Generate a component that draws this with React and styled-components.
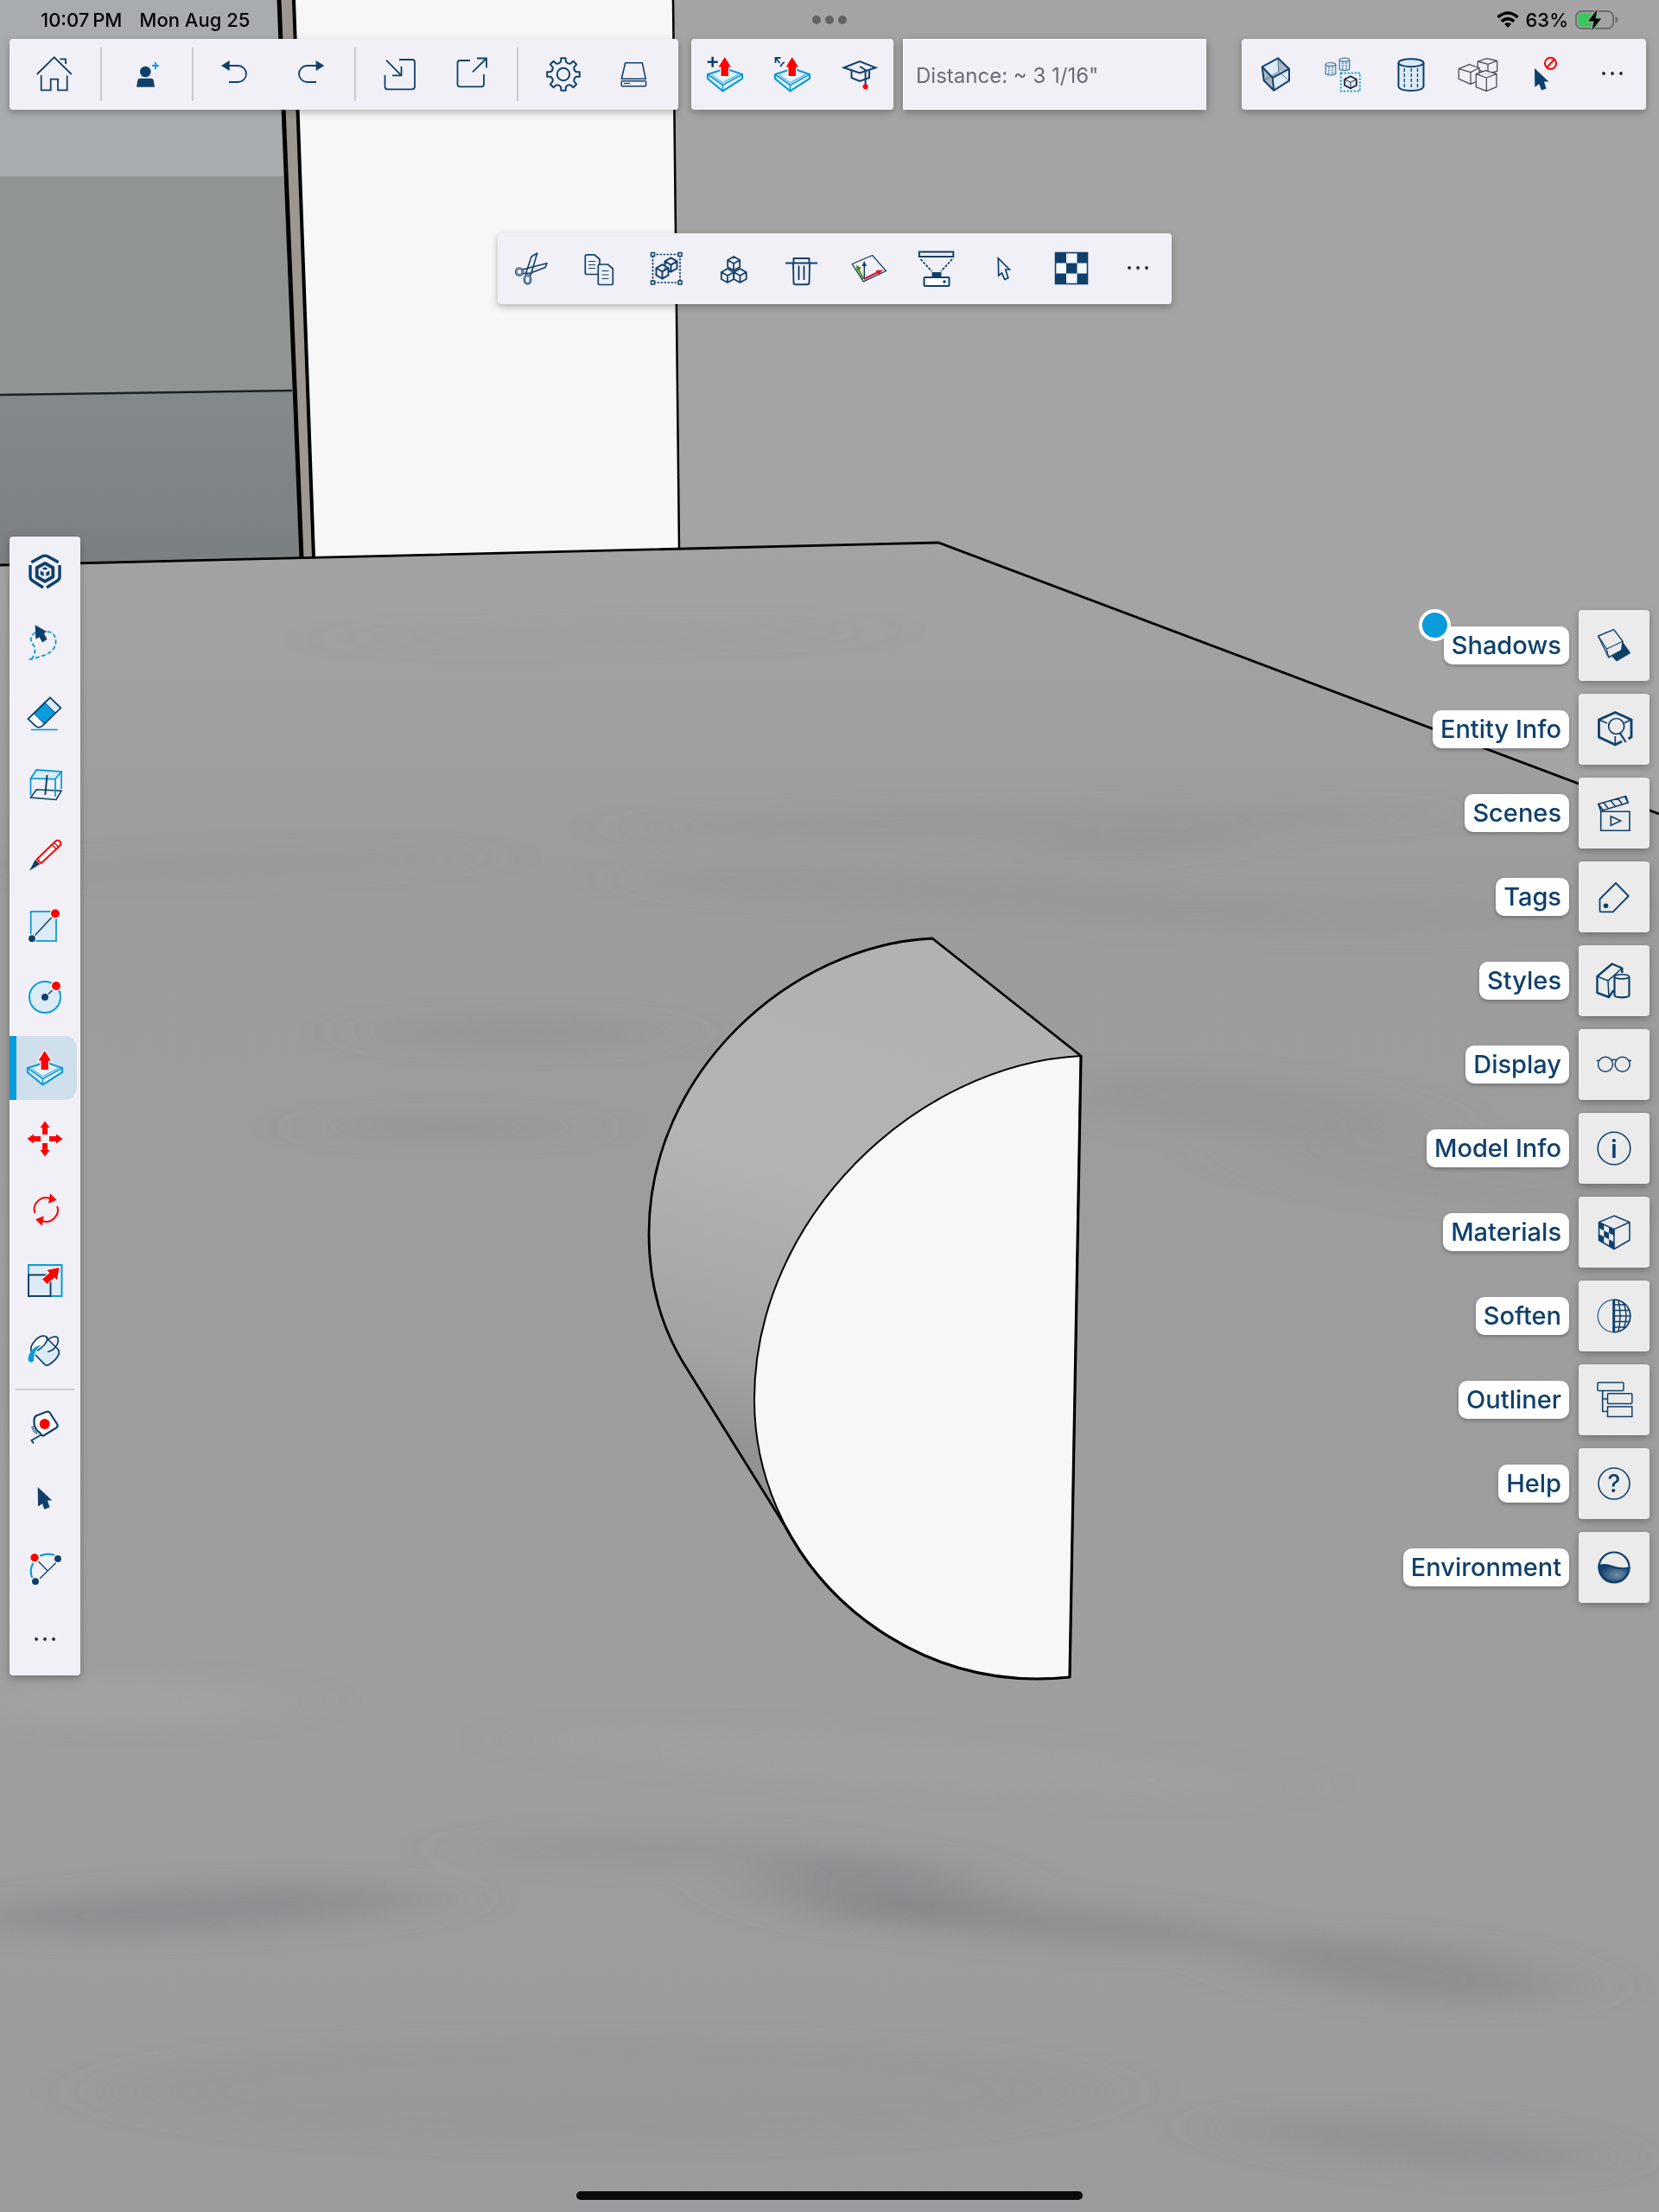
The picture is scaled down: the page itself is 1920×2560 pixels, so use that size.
import React, { useState } from "react";
import styled, { createGlobalStyle } from "styled-components";

const navy = "#0f406c";
const blue = "#0a9bda";
const red = "#ff0000";
const pale = "#dcebf7";
const panel = "#f1f0f6";

/* ---------- shared drawing parts ---------- */

const hex = (cx, cy, w, h) =>
  `M${cx} ${cy - h}L${cx + w} ${cy - h / 2}V${cy + h / 2}L${cx} ${cy + h}L${cx - w} ${cy + h / 2}V${cy - h / 2}Z` +
  `M${cx - w} ${cy - h / 2}L${cx} ${cy}L${cx + w} ${cy - h / 2}M${cx} ${cy}V${cy + h}`;

const gearPath = () => {
  const parts = [];
  const at = (deg, r) => {
    const a = ((deg - 90) * Math.PI) / 180;
    return `${(24 + r * Math.cos(a)).toFixed(2)} ${(24 + r * Math.sin(a)).toFixed(2)}`;
  };
  for (let i = 0; i < 8; i++) {
    const d = i * 45;
    parts.push(`${i ? "L" : "M"}${at(d - 8, 19)}`);
    parts.push(`L${at(d + 8, 19)}`);
    parts.push(`L${at(d + 11, 15)}`);
    parts.push(`Q${at(d + 22.5, 12.6)} ${at(d + 34, 15)}`);
  }
  return parts.join("") + "Z";
};

const Dots = () => (
  <g fill="#26243a" stroke="none">
    <circle cx="14" cy="23" r="1.9" />
    <circle cx="24" cy="23" r="1.9" />
    <circle cx="34" cy="23" r="1.9" />
  </g>
);

const PushPull = () => (
  <>
    <path d="M25 17.5L44 24V29L21.5 43.5L4 29V24Z" stroke={blue} strokeWidth="2.2" fill="#e4f1fa" />
    <path d="M4 24L21.5 36.5L44 24M21.5 36.5V43.5" stroke={blue} strokeWidth="1.6" />
    <path d="M8.5 24.5L21.5 33.8L39.5 24" stroke={blue} strokeWidth=".9" />
    <path
      d="M23.7 4L31 15.5H28V26H19.5V15.5H16.5Z"
      fill={red}
      stroke="#fff"
      strokeWidth="2.4"
      paintOrder="stroke"
    />
  </>
);

const Knob = ({ x, y, r = 4, color = navy }) => (
  <circle cx={x} cy={y} r={r} fill={color} stroke="#fff" strokeWidth="2.4" paintOrder="stroke" />
);

const icons = {
  home: (
    <path
      d="M2.7 24L22.7 4.3L42.7 24M29.3 6.3H36V12M7.7 25V42.3H18.7V29.7H27V42.3H37.7V25.5"
      strokeWidth="1.8"
    />
  ),
  invite: (
    <>
      <circle cx="22.3" cy="21" r="6.3" fill={navy} stroke="none" />
      <path d="M12 38.7L13.3 31Q13.8 28.7 16 28.7H29Q31.2 28.7 31.7 31L33 38.7Z" fill={navy} stroke="none" />
      <path d="M34 10V18M30 14H38" stroke={blue} />
    </>
  ),
  undo: (
    <>
      <path d="M4 14L13.7 8V20Z" fill={navy} stroke="none" />
      <path d="M13 14H23.5A9.5 9.5 0 0 1 23.5 33H13" strokeWidth="1.8" />
    </>
  ),
  redo: (
    <>
      <path d="M41.3 14L31.6 8V20Z" fill={navy} stroke="none" />
      <path d="M32 14H21.5A9.5 9.5 0 0 0 21.5 33H32" strokeWidth="1.8" />
    </>
  ),
  import: (
    <path
      d="M22 7H37Q40 7 40 10V38Q40 41.3 37 41.3H8.5Q5.5 41.3 5.5 38V25M7 7.7L24.5 25.3M24.5 14.7V25.3H14"
      strokeWidth="1.8"
    />
  ),
  export: (
    <path
      d="M22 8H10.5Q7.5 8 7.5 11V35.5Q7.5 38.3 10.5 38.3H35Q38 38.3 38 35.5V24M25 21.3L41 5.5M30 5.5H41V16.5"
      strokeWidth="1.8"
    />
  ),
  gear: (
    <>
      <path d={gearPath()} strokeWidth="2" strokeLinejoin="round" />
      <circle cx="24" cy="24" r="7.2" strokeWidth="2" />
    </>
  ),
  drive: (
    <>
      <path d="M13.7 10.7H33.3L37.3 29.3H9.3Z" strokeWidth="1.6" strokeLinejoin="round" />
      <rect x="9.3" y="31.7" width="28.3" height="6" rx="1" strokeWidth="1.5" />
      <path d="M12 34.5H19" strokeWidth="1.2" />
    </>
  ),
  pushAdd: (
    <>
      <PushPull />
      <path d="M9.7 3.7V15.7M3.7 9.7H15.7" strokeWidth="2.6" />
    </>
  ),
  pushStretch: (
    <>
      <PushPull />
      <path d="M4.5 11V5H10.5M4.5 5L9.5 11M10 15L14 10M14 10L14.5 11" strokeWidth="1.8" />
    </>
  ),
  learn: (
    <>
      <path d="M5.7 16.3L24 9L42.5 16.3L24 22.5Z" />
      <path d="M14.5 19.5V28L24 32L35 28V20" />
      <path d="M24 15L30.6 19V36" />
      <circle cx="30.6" cy="38.3" r="3" fill={red} stroke="none" />
    </>
  ),
  xray: (
    <>
      <path d="M27 5.3L40 17.7V31.3L22.3 42.7L10.7 31.3L8.7 15.3Z" fill={pale} stroke="none" />
      <path
        d="M8.7 15.3L20.7 28L22.3 42.7L10.7 31.3ZM27 5.3L40 17.7L27.7 21Z"
        fill="#a9b6c4"
        stroke="none"
      />
      <path d="M27 5.3L27.7 21L10.7 31.3M27.7 21L40 31.3" stroke="#5b7088" strokeWidth="1" />
      <path
        d="M27 5.3L40 17.7V31.3L22.3 42.7L10.7 31.3L8.7 15.3ZM8.7 15.3L20.7 28L40 17.7M20.7 28L22.3 42.7"
        strokeLinejoin="round"
      />
    </>
  ),
  hideRest: (
    <>
      {[[10, 12.5], [26, 7.2]].map(([x, y]) => (
        <g key={x} stroke="#4d7393" strokeWidth="1.2" fill={pale}>
          <path d={`M${x - 5.8} ${y}V${y + 11}Q${x} ${y + 14} ${x + 5.8} ${y + 11}V${y}`} />
          <ellipse cx={x} cy={y} rx="5.8" ry="2" />
          <path d={`M${x - 2} ${y + 3}V${y + 12}M${x + 2} ${y + 3}V${y + 12}`} strokeDasharray="2 1" />
        </g>
      ))}
      <rect x="21.8" y="22.5" width="22" height="21" stroke={blue} strokeDasharray="2 2" />
      <path d={hex(33, 33.3, 6.8, 7)} stroke="#26243a" strokeWidth="1" fill={pale} />
      <path d="M33 26.3L39.8 29.8V36.8L33 40.3L26.2 36.8V29.8Z" stroke="#26243a" strokeWidth="1.8" />
    </>
  ),
  cylinder: (
    <>
      <path d="M10.5 10.7V38.5Q12 42.7 25 43Q38 42.7 39.5 38.5V10.7" fill={pale} />
      <ellipse cx="25" cy="10.7" rx="14.5" ry="4.5" fill={pale} />
      <path d="M17.3 17V40M25.3 17V41M32.5 17V40" strokeWidth="1.3" strokeDasharray="4 2" />
    </>
  ),
  boxes: (
    <g stroke="#4c4a5c" strokeWidth="1.3" fill={panel} strokeLinejoin="round">
      <path d="M35 5.7L46.7 8.5V20.3L36 23L24.3 18.7V9ZM24.3 9L36 12.3L46.7 8.5M36 12.3V23" />
      <path d="M14.3 12.7L26 16.5V31L16 35.3L2.3 29.3V17.7ZM2.3 17.7L16 21.7L26 16.5M16 21.7V35.3" />
      <path d="M33.3 19.7L46 23.3V38.7L34.3 43.3L22.3 38.7V23.7ZM22.3 23.7L34.3 28L46 23.3M34.3 28V43.3" />
    </g>
  ),
  deselect: (
    <>
      <path
        d="M12 17L28.5 32.5H23L25.5 40.5L20 42.5L17.3 35.3L12.3 38.7Z"
        fill={navy}
        stroke="none"
      />
      <circle cx="30.5" cy="11.3" r="6.6" stroke={red} />
      <path d="M26 16L35 6.7" stroke={red} />
    </>
  ),
  more: <Dots />,
  cut: (
    <>
      <path
        d="M17 31L24 10L30.7 6L23 32M13.5 25L29 21L42 17.8L40 22.5L23 29L13.5 29.5"
        strokeWidth="1.6"
        strokeLinejoin="round"
      />
      <ellipse cx="10" cy="27.5" rx="3.8" ry="4" strokeWidth="2.6" />
      <ellipse cx="19.5" cy="36.5" rx="3.6" ry="5" strokeWidth="2.6" />
      <ellipse cx="10" cy="27.5" rx="3.8" ry="4" stroke="#fff" strokeWidth=".6" />
      <ellipse cx="19.5" cy="36.5" rx="3.6" ry="5" stroke="#fff" strokeWidth=".6" />
    </>
  ),
  copy: (
    <>
      <path d="M23 30.5H10Q8.3 30.5 8.3 29V9.5Q8.3 7.8 10 7.8H19L25 13V20" strokeWidth="1.7" />
      <path
        d="M12 15.5H20M12 19.5H20M12 23.5H20M27.5 26.5H35.5M27.5 31H35.5M27.5 35.5H35.5"
        strokeWidth="1"
      />
      <path
        d="M23.3 20.5Q23.3 19 25 19H34.5L40.3 24V41Q40.3 42.5 38.5 42.5H25Q23.3 42.5 23.3 41Z"
        strokeWidth="1.7"
      />
    </>
  ),
  group: (
    <>
      <path d="M8.5 7.5H40V40H8.5Z" strokeDasharray="2.5 1.5" strokeWidth="1.7" />
      <g fill={panel} strokeWidth="1.5">
        <path d="M6.5 5.5H10.5V9.5H6.5ZM38 5.5H42V9.5H38ZM6.5 38H10.5V42H6.5ZM38 38H42V42H38Z" />
        <path d={hex(29.5, 19.5, 7, 8.2)} strokeWidth="2" />
        <path d={hex(19.5, 27.3, 7, 8.2)} strokeWidth="2" />
      </g>
    </>
  ),
  components: (
    <g strokeWidth="1.8" strokeLinejoin="round">
      <path d={hex(24.2, 18, 7, 8)} />
      <path d={hex(17, 32, 7.2, 8)} />
      <path d={hex(31.5, 32, 7.2, 8)} />
    </g>
  ),
  trash: (
    <path
      d="M6 17.5H43M15.5 17.5V12H33.5V17.5M15 18L15.5 40Q15.5 42.3 18 42.3H31Q33.5 42.3 33.5 40L34 18M21.5 20.5V37M27.5 20.5V37"
      strokeWidth="1.9"
    />
  ),
  axes: (
    <>
      <path d="M5.2 18.5L28.7 8.5L44.4 26.5L18.3 38.8Z" strokeWidth="1.3" />
      <path d="M19.3 35V18" strokeWidth="1.5" />
      <path d="M19.3 15L22 21H16.5Z" fill={navy} stroke="none" />
      <path d="M18.5 36L12.5 25" stroke="#4a8a12" />
      <path d="M9.5 20L16 23L11 27Z" fill="#4a8a12" stroke="none" />
      <path d="M19 36L35 28" stroke="#d8141c" />
      <path d="M41 25.3L32.5 26L35.5 31Z" fill="#d8141c" stroke="none" />
    </>
  ),
  flatten: (
    <>
      <rect x="4.8" y="4.5" width="39.5" height="5.5" />
      <path d="M6.5 13L19.5 27M43 13L30 27" strokeDasharray="3 1.5" strokeWidth="1.8" />
      <rect x="19.5" y="28" width="11" height="5.5" fill={navy} stroke="none" />
      <rect x="10.5" y="34" width="29" height="10" rx="1" fill="#fff" />
      <circle cx="34" cy="39" r="1.8" fill={navy} stroke="none" />
    </>
  ),
  select: (
    <path
      d="M18.3 11.8L31.3 25H26.7L29.8 34.8L25.7 36.3L22.5 28.8L18.7 32Z"
      strokeWidth="1.7"
    />
  ),
  checker: (
    <>
      <rect x="6.5" y="5.5" width="37" height="36" fill="#f4f8fc" strokeWidth="1.6" />
      <path
        d="M6.5 5.5H19V17.5H6.5ZM31.5 5.5H43.5V17.5H31.5ZM19 17.5H31.5V29.5H19ZM6.5 29.5H19V41.5H6.5ZM31.5 29.5H43.5V41.5H31.5Z"
        fill={navy}
        stroke="none"
      />
    </>
  ),
  brand: (
    <g strokeWidth="3.4">
      <path d="M8.3 12.8L20.5 6Q24 4.3 27.5 6L39.7 12.8M7 16V29.5Q7 32.5 9.5 34L22 42M41 16V29.5Q41 32.5 38.5 34L26 42" />
      <path d="M24 13.8L33.3 19V29.5L24 34.8L14.7 29.5V19Z" strokeWidth="3.8" strokeLinejoin="round" />
      <path
        d="M24 18.3L27.5 20L24 21.7L20.5 20ZM18.7 22.5L22.7 24.5V29L18.7 27ZM29.3 22.5L25.3 24.5V29L29.3 27Z"
        fill={navy}
        stroke="none"
      />
    </g>
  ),
  lasso: (
    <>
      <path
        d="M13 12C6 16 7 22 11 27C14 32 12 38 9 42L5.5 43.5C18 40 36 37 36.5 23.5C37 13 30 9 21 12"
        stroke={blue}
        strokeWidth="1.8"
        strokeDasharray="5 2.5"
      />
      <path
        d="M12.7 3.3L26 11L23 13L26.5 20L21 23.5L17.5 17.3L13.3 19.7Z"
        fill={navy}
        stroke="none"
      />
    </>
  ),
  eraser: (
    <>
      <path d="M30 5.3L42.3 17.3L21.5 37.7Q17 42 12.5 37.7L4.5 30Z" fill={pale} stroke="none" />
      <path d="M11.3 23.5L22.7 36L21 38Q17 42 12.5 37.7L4.5 30Z" fill="#fff" stroke="none" />
      <path d="M23.7 11L36.3 23.3L23.5 36L11 23.5Z" fill={blue} strokeWidth="1" />
      <path d="M30 5.3L42.3 17.3L21.5 37.7Q17 42 12.5 37.7L4.5 30Z" strokeWidth="1.8" />
      <path d="M8 42.5H38.7" stroke={blue} strokeWidth="1.6" />
    </>
  ),
  section: (
    <>
      <path d="M7.5 39L14.3 29.7L43 31.3L37 41.5Z" strokeWidth="1.6" />
      <path d="M7.5 17L14.3 7L43 9L36 17.7Z" fill={pale} stroke={blue} strokeWidth="1.8" />
      <path d="M7.5 17V36.5M36 17.7V38M43 9V29" stroke={blue} strokeWidth="1.8" />
      <path d="M26.5 13L24.3 36" strokeWidth="2" />
    </>
  ),
  pencil: (
    <>
      <path d="M14.7 28.5L36 7.7Q39 5 41.5 8Q43.5 10.5 41 13L19.7 33Z" stroke={red} fill="#fff" />
      <path d="M32 11.5L37 16.5M34.5 9L39.5 14" stroke={red} strokeWidth="1.5" />
      <path d="M6 41.7L12.7 29L18.5 34Z" fill={navy} stroke="none" />
    </>
  ),
  rectangle: (
    <>
      <rect x="7.7" y="7" width="29.3" height="34" fill={pale} stroke={blue} strokeWidth="1.8" />
      <path d="M9 38.3L36 9.3" strokeWidth="1.5" />
      <Knob x={9} y={38.3} />
      <Knob x={36} y={9.3} r={5} color={red} />
    </>
  ),
  circle: (
    <>
      <circle cx="24" cy="24" r="18" fill={pale} stroke={blue} />
      <path d="M28 20.5L32.5 16" strokeWidth="1.5" />
      <circle cx="24" cy="24" r="4" fill={navy} stroke="none" />
      <Knob x={37} y={11} r={5} color={red} />
    </>
  ),
  push: <PushPull />,
  move: (
    <g fill={red} stroke="none">
      {[0, 90, 180, 270].map((a) => (
        <path key={a} transform={`rotate(${a} 24 24)`} d="M24 3.5L29.5 11H27V19H21V11H18.5Z" />
      ))}
    </g>
  ),
  rotate: (
    <>
      {[0, 180].map((a) => (
        <g key={a} transform={`rotate(${a} 25.3 24)`}>
          <path d="M12.3 28A13.7 13.7 0 0 1 30 11" stroke={red} />
          <path d="M30 5.3L37.5 12.7L28 16.7Z" fill={red} stroke="none" />
        </g>
      ))}
    </>
  ),
  scale: (
    <>
      <rect x="5" y="6" width="38.5" height="36" fill={pale} stroke={blue} />
      <rect x="5" y="17.5" width="25.5" height="24.5" />
      <path
        d="M40.5 9L26 12L29.3 15L21 22.5L26.5 28L35 20.5L38 23.5Z"
        fill={red}
        stroke="#fff"
        strokeWidth="2"
        paintOrder="stroke"
      />
    </>
  ),
  paint: (
    <>
      <path
        d="M11 17L19 8L27 8L40 22.5Q41.5 25 39.5 29Q36 36 29 40Q26 41.5 23.5 39L9 24Z"
        fill={pale}
        stroke="none"
      />
      <path d="M8 24C6 16 17 4 25 6.5C30 8.5 24 18 15 23" strokeWidth="1.7" fill="#fff" />
      <path d="M20 17C12 16 3 27 5 35Q8 38.5 11 35C11 27 13 21 20 17Z" fill={blue} stroke="none" />
      <path
        d="M25 7.5L39.5 22Q41.3 25 39.5 28.5Q36 35 28.5 39.5Q26 41 23.5 38.8L13 28"
        strokeWidth="1.7"
      />
      <path d="M27 11C32 6 38 6 39 9C40.5 15 35 23 27 24.5" strokeWidth="1.7" />
    </>
  ),
  tape: (
    <>
      <path
        d="M14 10.5L25.5 6Q28.5 5 30 7.5L38.3 20.5Q39.5 22.8 37 24.5L22.5 33.5Q20 34 18 30Q11 26 11.5 16Q11.5 12 14 10.5Z"
        fill="#fff"
        strokeWidth="2.2"
      />
      <path d="M20.5 32L8.5 39L11 42.5" strokeWidth="1.9" />
      <path d="M9.5 23Q10.5 29 16 31.5" strokeWidth="2.6" strokeDasharray="1.2 1" />
      <circle cx="23.7" cy="20" r="6" fill={red} stroke="none" />
    </>
  ),
  pointer: (
    <path
      d="M15.7 11L32.3 26.5H27L29.5 34.5L23.3 36.8L21 30.3L16 33.5Z"
      fill={navy}
      stroke="none"
    />
  ),
  arc: (
    <>
      <path d="M18 8.8Q26 5 35 7.7M10.3 17Q5.5 26 9.3 34" stroke={blue} strokeWidth="2.2" />
      <path d="M16.7 15.3L27.3 26.3M36.7 16.7L18 35" strokeWidth="1.3" />
      <Knob x={12} y={10.7} r={4.7} color={red} />
      <Knob x={39} y={12} />
      <Knob x={13} y={38.3} />
    </>
  ),
  shadows: (
    <>
      <path d="M22 36.7L33 29.5L34 20.5L42.7 32.7L27 42Z" fill={navy} strokeWidth="1" />
      <path d="M5.7 13L23.7 5.7L34 19.3L32.7 29.5L17.7 37.7Z" strokeWidth="1.4" />
      <path d="M5.7 13L15.5 28L17.7 37.7M15.5 28L34 19.3" strokeWidth="1.1" />
    </>
  ),
  entity: (
    <>
      <path d="M33 38L25.3 42L6.5 33V13L25.3 4.5L44 13V33L40.5 35" strokeWidth="2.8" />
      <path d="M6.5 13L16 17M44 13L36 16.5M25.3 32V42" strokeWidth="1.7" />
      <circle cx="26.7" cy="20.5" r="9" strokeWidth="1.7" />
      <path d="M31 28.7L37.7 39" strokeWidth="2.2" />
    </>
  ),
  scenes: (
    <>
      <path
        d="M5.7 13.5L37.7 4.5L40.3 12L8.7 21.5ZM12 12L17 18.5M20 9.5L25.5 16M28.5 7.2L33.5 13.7M6 13.5L11 20.5M36.5 5L40 12"
        strokeWidth="1.6"
      />
      <path d="M8.7 22.3H42V44.3H8.7ZM20.3 27.7L31.7 33L20.3 38.3Z" strokeWidth="1.6" />
    </>
  ),
  tags: (
    <>
      <path
        d="M26 8L40.7 23L22.7 41.3H9Q7.5 41.3 7.5 39.8V26.5Z"
        strokeWidth="1.8"
        strokeLinejoin="round"
      />
      <circle cx="14.5" cy="34.3" r="2.8" fill={navy} stroke="none" />
    </>
  ),
  styles: (
    <>
      <path
        d="M33.3 15V9.5L21.7 4.5L4.5 19V38L18 43L23.5 35"
        strokeWidth="2.4"
        strokeLinejoin="round"
      />
      <path d="M4.5 19L17 24L33.3 9.5M17 24L18 43" strokeWidth="1.6" />
      <path
        d="M24.5 19.5V41Q24.5 43 33 43.3Q41.5 43 41.5 41V19.5"
        fill="#ebebec"
        strokeWidth="2.2"
      />
      <ellipse cx="33" cy="19.3" rx="8.5" ry="2.6" fill="#ebebec" strokeWidth="1.6" />
    </>
  ),
  display: (
    <>
      <circle cx="14" cy="23.7" r="8.5" strokeWidth="1.5" />
      <circle cx="33.7" cy="23.7" r="8.5" strokeWidth="1.5" />
      <path d="M3.7 19.5H7M40.5 19.5H44M21 19Q24 17.5 26.7 19" strokeWidth="1.5" />
    </>
  ),
  info: (
    <>
      <circle cx="24" cy="24" r="18.8" strokeWidth="1.6" />
      <text x="24" y="35" fontSize="28" fontWeight="600" textAnchor="middle" fill={navy} stroke="none">
        i
      </text>
    </>
  ),
  materials: (
    <>
      <path
        d="M6.3 12.3L12.2 15.1V22.3L18.1 25.1V32.3L24 35.5V43.7L18.1 40.5V32.3L12.2 29.3V22.3L6.3 19.3Z M18.1 17.9L24 20.7V28L18.1 25.1Z M6.3 26.3L12.2 29.3V36.8L6.3 33.3Z"
        fill={navy}
        stroke="none"
      />
      <path
        d="M24 5L42 12.5V33.3L24 43.5L6.5 33.3V12.5ZM6.5 12.5L24 20.7L42 12.5M24 20.7V43.5"
        strokeWidth="1.6"
      />
    </>
  ),
  soften: (
    <>
      <circle cx="24" cy="24" r="18.8" strokeWidth="1.4" opacity=".75" />
      <path
        d="M24 5.2A18.8 18.8 0 0 1 24 42.8M24.5 11H37M24.5 17.5H41M24.5 24H42.5M24.5 30.5H41M24.5 37H37M29 6Q33 24 29 42M35 9Q41 24 35 39"
        strokeWidth="1.5"
      />
      <path d="M23.7 5.2V42.8" strokeWidth="3" />
    </>
  ),
  outliner: (
    <>
      <rect x="5" y="4" width="30" height="9.5" rx="1" strokeWidth="1.5" />
      <rect x="16.5" y="16.8" width="28.3" height="11.7" rx="1" strokeWidth="1.5" />
      <rect x="16.5" y="32" width="28.3" height="11.5" strokeWidth="1.5" />
      <path d="M10.7 13.5V37.5H16.5M10.7 23H16.5" strokeWidth="1.6" />
    </>
  ),
  help: (
    <>
      <circle cx="24" cy="24" r="18" strokeWidth="1.6" />
      <text x="24" y="34" fontSize="28" fontWeight="500" textAnchor="middle" fill={navy} stroke="none">
        ?
      </text>
    </>
  ),
  environment: (
    <>
      <defs>
        <radialGradient id="water" cx=".6" cy=".6" r=".6">
          <stop offset="0" stopColor="#7390ab" />
          <stop offset="1" stopColor={navy} />
        </radialGradient>
      </defs>
      <path d="M6.5 22Q14 19.5 22 23T41.5 24.5A17.5 17.5 0 0 1 6.5 22Z" fill="url(#water)" />
      <circle cx="24" cy="24" r="17.5" strokeWidth="2.2" />
    </>
  ),
};

const Icon = ({ name }) => (
  <Glyph viewBox="0 0 48 48" aria-hidden="true">
    {icons[name]}
  </Glyph>
);

const Tools = ({ items }) =>
  items.map(([name, label]) => (
    <ToolButton key={name} aria-label={label}>
      <Icon name={name} />
    </ToolButton>
  ));

/* ---------- data ---------- */

const fileGroups = [
  [["home", "Home"]],
  [["invite", "Invite"]],
  [["undo", "Undo"], ["redo", "Redo"]],
  [["import", "Import"], ["export", "Export"]],
  [["gear", "Settings"], ["drive", "Storage"]],
];

const modifiers = [
  ["pushAdd", "Push/pull new face"],
  ["pushStretch", "Push/pull stretch"],
  ["learn", "Learn"],
];

const viewTools = [
  ["xray", "X-ray"],
  ["hideRest", "Hide rest of model"],
  ["cylinder", "Hidden geometry"],
  ["boxes", "Similar components"],
  ["deselect", "Deselect"],
  ["more", "More view tools"],
];

const editTools = [
  ["cut", "Cut"],
  ["copy", "Copy"],
  ["group", "Make group"],
  ["components", "Make component"],
  ["trash", "Delete"],
  ["axes", "Align axes"],
  ["flatten", "Flatten"],
  ["select", "Select"],
  ["checker", "Texture"],
  ["more", "More edit tools"],
];

const drawTools = [
  ["brand", "Search"],
  ["lasso", "Lasso"],
  ["eraser", "Eraser"],
  ["section", "Section plane"],
  ["pencil", "Line"],
  ["rectangle", "Rectangle"],
  ["circle", "Circle"],
  ["push", "Push/Pull"],
  ["move", "Move"],
  ["rotate", "Rotate"],
  ["scale", "Scale"],
  ["paint", "Paint"],
];

const recentTools = [
  ["tape", "Tape measure"],
  ["pointer", "Select"],
  ["arc", "Arc"],
  ["more", "More tools"],
];

const panels = [
  ["shadows", "Shadows"],
  ["entity", "Entity Info"],
  ["scenes", "Scenes"],
  ["tags", "Tags"],
  ["styles", "Styles"],
  ["display", "Display"],
  ["info", "Model Info"],
  ["materials", "Materials"],
  ["soften", "Soften"],
  ["outliner", "Outliner"],
  ["help", "Help"],
  ["environment", "Environment"],
];

/* ---------- 3D viewport ---------- */

// cx, cy, rx, ry, colour, opacity, tilt
const smudges = [
  [700, 735, 300, 10, "#8f8f90", 0.12, -1],
  [1320, 975, 110, 8, "#77777a", 0.35, -3],
  [1200, 950, 460, 14, "#88888a", 0.2, -1],
  [1130, 1035, 380, 20, "#8c8c8e", 0.2, 3],
  [280, 1000, 260, 14, "#8c8c8e", 0.16, -2],
  [1560, 1060, 300, 20, "#8c8c8e", 0.16, 0],
  [600, 1195, 150, 18, "#858587", 0.3, 0],
  [520, 1305, 130, 14, "#858587", 0.26, 0],
  [1430, 1280, 200, 34, "#858587", 0.24, 6],
  [1720, 1360, 260, 34, "#8c8c8e", 0.22, 6],
  [1010, 2185, 130, 40, "#7c7c80", 0.45, 6],
  [1210, 2225, 240, 24, "#7c7c80", 0.4, 5],
  [1620, 2280, 180, 34, "#7c7c80", 0.42, 7],
  [230, 2210, 260, 28, "#7e7e82", 0.42, -3],
  [760, 2140, 200, 20, "#88888a", 0.26, 0],
  [140, 1970, 170, 26, "#acacac", 0.3, 0],
  [1050, 2040, 420, 26, "#a9a9aa", 0.25, 4],
  [700, 2420, 560, 60, "#88888c", 0.16, 0],
  [1640, 2480, 200, 28, "#838386", 0.32, 6],
];

const Viewport = () => (
  <Canvas viewBox="0 0 1920 2560" preserveAspectRatio="xMidYMid slice" aria-hidden="true">
    <defs>
      <linearGradient id="floor" x1="0" y1="0" x2="0" y2="1">
        <stop offset="0" stopColor="#a3a3a3" />
        <stop offset=".2" stopColor="#9c9c9d" />
        <stop offset=".7" stopColor="#9e9e9f" />
        <stop offset="1" stopColor="#9b9b9d" />
      </linearGradient>
      <linearGradient id="glass" x1="0" y1="0" x2="0" y2="1">
        <stop offset="0" stopColor="#84898c" />
        <stop offset="1" stopColor="#7b7f81" />
      </linearGradient>
      <linearGradient id="curve" gradientUnits="userSpaceOnUse" x1="1000" y1="1180" x2="850" y2="1680">
        <stop offset="0" stopColor="#b2b2b2" />
        <stop offset=".35" stopColor="#b4b4b4" />
        <stop offset=".8" stopColor="#a3a3a3" />
        <stop offset="1" stopColor="#929292" />
      </linearGradient>
      <filter id="soft" x="-20%" y="-20%" width="140%" height="140%">
        <feGaussianBlur stdDeviation="54 12" />
      </filter>
    </defs>
    <rect width="1920" height="2560" fill="#a4a4a4" />
    <path d="M0 0H322L348 646L0 654Z" fill="#909594" />
    <path d="M0 0H322L330 204H0Z" fill="#a8acae" />
    <path d="M0 457L338 452L348 646L0 654Z" fill="url(#glass)" />
    <path d="M0 457L338 452" stroke="#1d2020" strokeWidth="2.5" />
    <path d="M324 0L350 648H363L341 0Z" fill="#9c9790" />
    <path d="M341 0H779L786 636L363 646Z" fill="#f7f7f7" />
    <path d="M323 0L349 646" stroke="#000" strokeWidth="5" />
    <path d="M340 0L363 645" stroke="#000" strokeWidth="4" />
    <path d="M779 0L786 636" stroke="#000" strokeWidth="2.5" />
    <path d="M0 654L1086 628L1920 942V2560H0Z" fill="url(#floor)" />
    <g filter="url(#soft)">
      {smudges.map(([cx, cy, rx, ry, fill, opacity, tilt]) => (
        <ellipse
          key={`${cx}-${cy}`}
          cx={cx}
          cy={cy}
          rx={rx}
          ry={ry}
          fill={fill}
          opacity={opacity}
          transform={`rotate(${tilt} ${cx} ${cy})`}
        />
      ))}
    </g>
    <path d="M0 654L1086 628L1920 942" fill="none" stroke="#000" strokeWidth="2.8" />
    <path
      d="M1079 1086C915 1094 751 1241 751 1428C751 1486 765 1534 790 1576L909 1767L1251 1222Z"
      fill="url(#curve)"
      stroke="#000"
      strokeWidth="2.8"
      strokeLinejoin="round"
    />
    <path
      d="M1251 1222C1060 1232 873 1410 873 1620C873 1795 1020 1943 1200 1943Q1220 1943 1238 1941Z"
      fill="#f7f7f7"
      stroke="#000"
      strokeWidth="2"
      strokeLinejoin="round"
    />
    <path
      d="M909 1767C964 1870 1074 1943 1200 1943Q1220 1943 1238 1941L1251 1222"
      fill="none"
      stroke="#000"
      strokeWidth="3.2"
      strokeLinejoin="round"
    />
  </Canvas>
);

const App = () => {
  const [active, setActive] = useState("push");
  const [distance, setDistance] = useState('Distance: ~ 3 1/16"');

  return (
    <Screen>
      <GlobalStyle />
      <Viewport />
      <Chrome>
        <StatusBar>
          <Clock>
            <span>10:07&#8201;PM</span>
            <span>Mon Aug 25</span>
          </Clock>
          <Multitask aria-label="Multitasking">
            <i />
            <i />
            <i />
          </Multitask>
          <Power>
            <svg width="26" height="20" viewBox="0 0 26 20" fill="none" stroke="#000" strokeWidth="3.6">
              <path d="M1.5 7Q13 -3 24.5 7M5.7 11.7Q13 5.5 20.3 11.7" />
              <path d="M13 19L9 14.7Q13 12 17 14.7Z" fill="#000" stroke="none" />
            </svg>
            <span>63%</span>
            <svg width="50" height="24" viewBox="0 0 50 24">
              <rect x="1" y="2" width="43" height="20" rx="6.5" fill="none" stroke="#6d6d6d" strokeWidth="2" />
              <path d="M7.5 4.5H27V19.5H7.5Q3.5 19.5 3.5 15.5V8.5Q3.5 4.5 7.5 4.5Z" fill="#34c759" />
              <path d="M46.5 8Q49.5 9.5 49.5 12T46.5 16Z" fill="#6d6d6d" />
              <path
                d="M25.5 0L15 13.5H21.5L19.5 24L30 10.5H23.5Z"
                fill="#000"
                stroke="#a4a4a4"
                strokeWidth="2.5"
                paintOrder="stroke"
              />
            </svg>
          </Power>
        </StatusBar>

        <TopBar>
          <Bar>
            {fileGroups.map((group) => (
              <Group key={group[0][0]}>
                {group.map(([name, label]) => (
                  <ToolButton key={name} $wide aria-label={label}>
                    <Icon name={name} />
                  </ToolButton>
                ))}
              </Group>
            ))}
          </Bar>
          <Bar>
            <Tools items={modifiers} />
          </Bar>
          <Measurement
            aria-label="Measurement"
            value={distance}
            onChange={(e) => setDistance(e.target.value)}
          />
          <Bar $end>
            <Tools items={viewTools} />
          </Bar>
        </TopBar>

        <ContextBar>
          <Tools items={editTools} />
        </ContextBar>

        <HomeIndicator />
      </Chrome>

      <Docks>
        <ToolDock>
          {drawTools.map(([name, label]) => (
            <DockButton
              key={name}
              aria-label={label}
              aria-pressed={active === name}
              $active={active === name}
              onClick={() => setActive(name)}
            >
              <Icon name={name} />
            </DockButton>
          ))}
          <Rule />
          {recentTools.map(([name, label]) => (
            <DockButton key={name} aria-label={label}>
              <Icon name={name} />
            </DockButton>
          ))}
        </ToolDock>
        <PanelDock>
          {panels.map(([name, label], i) => (
            <PanelRow key={name}>
              <PanelLabel htmlFor={`panel-${name}`}>
                {i === 0 && <Handle />}
                {label}
              </PanelLabel>
              <PanelButton id={`panel-${name}`}>
                <Icon name={name} />
              </PanelButton>
            </PanelRow>
          ))}
        </PanelDock>
      </Docks>
    </Screen>
  );
};

export default App;

const GlobalStyle = createGlobalStyle`
  *,
  *::before,
  *::after {
    box-sizing: border-box;
  }
  body {
    margin: 0;
    font-family: Inter, "Liberation Sans", sans-serif;
  }
  button {
    padding: 0;
    border: 0;
    background: none;
    font: inherit;
    cursor: pointer;
  }
`;

const Screen = styled.div`
  position: relative;
  display: grid;
  min-height: 100vh;
  overflow: hidden;
  background: #a4a4a4;
`;

const Canvas = styled.svg`
  position: absolute;
  inset: 0;
  width: 100%;
  height: 100%;
`;

const Chrome = styled.div`
  position: relative;
  grid-area: 1 / 1;
  display: flex;
  flex-direction: column;
  align-items: stretch;
`;

const StatusBar = styled.header`
  display: grid;
  grid-template-columns: 1fr auto 1fr;
  align-items: center;
  height: 45px;
  padding: 0 47px;
  font-weight: 500;
  font-size: 22px;
  color: #000;
`;

const Clock = styled.div`
  display: flex;
  gap: 20px;
`;

const Multitask = styled.button`
  display: flex;
  gap: 5px;
  i {
    width: 10px;
    height: 10px;
    border-radius: 50%;
    background: #636363;
  }
`;

const Power = styled.div`
  display: flex;
  justify-content: flex-end;
  align-items: center;
  gap: 8px;
`;

const TopBar = styled.div`
  display: flex;
  padding: 0 15px 0 11px;
`;

const Bar = styled.nav`
  display: flex;
  height: 82px;
  margin-left: ${({ $end }) => ($end ? "auto" : "0")};
  border-radius: 4px;
  background: ${panel};
  box-shadow: 0 3px 8px rgba(0, 0, 0, 0.28);
  & + & {
    margin-left: 15px;
  }
`;

const Group = styled.div`
  display: flex;
  align-items: center;
  padding: 0 12px;
  & + & {
    position: relative;
  }
  & + &::before {
    content: "";
    position: absolute;
    left: -1px;
    top: 10px;
    bottom: 10px;
    width: 2px;
    background: #cbcbd0;
  }
  &:last-child {
    padding: 0 10px 0 12px;
  }
`;

const ToolButton = styled.button`
  display: flex;
  justify-content: center;
  align-items: center;
  width: ${({ $wide }) => ($wide ? "82px" : "78px")};
  height: 82px;
`;

const Glyph = styled.svg`
  width: 48px;
  height: 48px;
  fill: none;
  stroke: ${navy};
  stroke-width: 2;
  overflow: visible;
`;

const Measurement = styled.input`
  width: 351px;
  height: 82px;
  margin-left: 11px;
  padding: 2px 15px 0 14px;
  border: 1px solid #fff;
  border-radius: 0;
  outline: 0;
  background: ${panel};
  box-shadow: 0 3px 10px rgba(0, 0, 0, 0.3);
  font-family: inherit;
  font-size: 24px;
  color: #6e6a78;
`;

const ContextBar = styled(Bar)`
  align-self: center;
  margin: 143px 0 0 11px;
`;

const HomeIndicator = styled.div`
  align-self: center;
  width: 31%;
  max-width: 586px;
  height: 10px;
  margin: auto 0 14px;
  border-radius: 5px;
  background: #0b0b0b;
`;

const Docks = styled.div`
  position: relative;
  grid-area: 1 / 1;
  display: flex;
  justify-content: space-between;
  align-items: center;
  padding: 0 11px;
  pointer-events: none;
  & > * {
    pointer-events: auto;
  }
`;

const ToolDock = styled.nav`
  display: flex;
  flex-direction: column;
  width: 82px;
  border-radius: 4px;
  background: ${panel};
  box-shadow: 0 3px 8px rgba(0, 0, 0, 0.28);
`;

const DockButton = styled.button`
  display: flex;
  justify-content: center;
  align-items: center;
  height: 74px;
  margin: 4px 4px 4px 0;
  padding-left: ${({ $active }) => ($active ? "0" : "4px")};
  padding-right: ${({ $active }) => ($active ? "4px" : "0")};
  border-left: ${({ $active }) => ($active ? `8px solid ${blue}` : "0")};
  border-radius: 0 14px 14px 0;
  background: ${({ $active }) => ($active ? "#cfdfeb" : "transparent")};
`;

const Rule = styled.hr`
  width: 68px;
  height: 2px;
  margin: 2px auto;
  border: 0;
  background: #cbcbd0;
`;

const PanelDock = styled.section`
  display: flex;
  flex-direction: column;
  gap: 15px;
`;

const PanelRow = styled.div`
  display: flex;
  justify-content: flex-end;
  align-items: center;
  gap: 11px;
`;

const PanelLabel = styled.label`
  position: relative;
  height: 44px;
  padding: 0 9px;
  border-radius: 10px;
  background: #fff;
  box-shadow: 0 2px 4px rgba(0, 0, 0, 0.28);
  font-weight: 500;
  font-size: 29px;
  line-height: 43px;
  color: ${navy};
`;

const PanelButton = styled.button`
  display: flex;
  justify-content: center;
  align-items: center;
  width: 82px;
  height: 82px;
  border-radius: 4px;
  background: #ebebec;
  box-shadow: 0 3px 8px rgba(0, 0, 0, 0.28);
`;

const Handle = styled.span`
  position: absolute;
  top: -20px;
  left: -29px;
  width: 37px;
  height: 37px;
  border: 4px solid #fff;
  border-radius: 50%;
  background: ${blue};
`;
